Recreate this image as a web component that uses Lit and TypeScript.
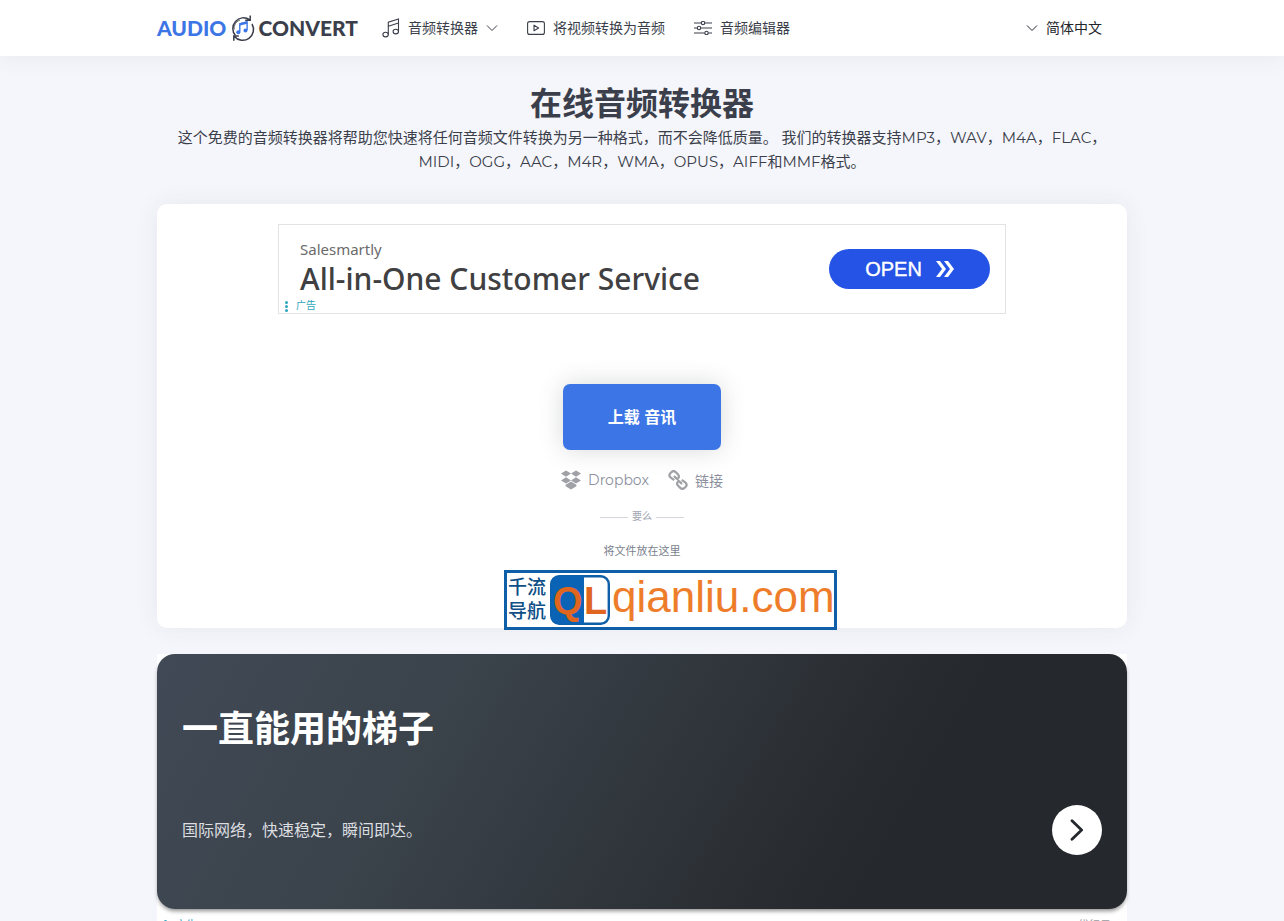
import { LitElement, html, css, svg } from "lit";
import { customElement } from "lit/decorators.js";

const chevron = html`<svg width="12" height="8" viewBox="0 0 12 8" aria-hidden="true">
  <path d="M1 1.5 6 6.5 11 1.5" fill="none" stroke="currentColor" />
</svg>`;

const noteIcon = html`<svg width="18" height="20" viewBox="0 0 18 20" fill="none" stroke="currentColor" stroke-width="1.1" aria-hidden="true">
  <ellipse cx="3.6" cy="16.6" rx="2.7" ry="2.3" /><ellipse cx="13.8" cy="13.6" rx="2.7" ry="2.3" />
  <path d="M6.3 16.6V4.2L16.5 1v12.6M6.3 8.2 16.5 5" />
</svg>`;

const videoIcon = html`<svg width="18" height="14" viewBox="0 0 18 14" fill="none" stroke="currentColor" stroke-width="1.1" aria-hidden="true">
  <rect x=".6" y=".6" width="16.8" height="12.8" rx="2" /><path d="M7 4.2v5.6L11.6 7z" stroke-linejoin="round" />
</svg>`;

const slidersIcon = html`<svg width="18" height="14" viewBox="0 0 18 14" fill="none" stroke="currentColor" stroke-width="1.1" aria-hidden="true">
  <path d="M0 2h7.2M10.8 2H18M0 7h3.2M6.8 7H18M0 12h10.7M14.3 12H18" />
  <circle cx="9" cy="2" r="1.7" /><circle cx="5" cy="7" r="1.7" /><circle cx="12.5" cy="12" r="1.7" />
</svg>`;

const logoMark = html`<svg width="26" height="28" viewBox="0 0 26 28" fill="none" aria-hidden="true">
  <g stroke="#3b3f4b" stroke-width="1.5">
    <path d="M6.4 21.6A10.8 10.8 0 0 1 20.6 5.6M16.2 6.2h5V1.6" />
    <path d="M5.2 15.5A8.6 8.6 0 0 1 11 6" stroke-width=".8" />
    <path d="M23 10A10.8 10.8 0 0 1 5.4 22.4M4.8 26.8v-4.8h5" />
  </g>
  <path d="M10.8 17.8V9.8L18.1 8v8" stroke="#3c76e6" stroke-width="1.4" />
  <path d="M10.8 10.3 18.1 8.5" stroke="#3c76e6" stroke-width="2.4" />
  <circle cx="9.3" cy="18.2" r="2" fill="#3c76e6" /><circle cx="16.5" cy="16.6" r="2" fill="#3c76e6" />
</svg>`;

const dropboxIcon = html`<svg width="20" height="20" viewBox="0 0 20 20" fill="currentColor" aria-hidden="true">
  <path d="M5 .5 10 3.6 5 6.8 0 3.6zM15 .5l5 3.1-5 3.2-5-3.2zM5 7.2l5 3.2-5 3.1-5-3.1zM15 7.2l5 3.2-5 3.1-5-3.1zM10 11.6l5.4 3.2v1.4L10 19.6l-5.4-3.4v-1.4z" />
</svg>`;

const linkIcon = html`<svg width="20" height="20" viewBox="0 0 20 20" fill="none" stroke="currentColor" stroke-width="2.2" aria-hidden="true">
  <path d="M6.2 10.2 2.5 7.4a3 3 0 0 1-.2-4.2l1.2-1.1a3 3 0 0 1 4.2 0l2.2 2.2a3 3 0 0 1 0 4.2L8.6 9.8M13.8 9.8l3.7 2.8a3 3 0 0 1 .2 4.2l-1.2 1.1a3 3 0 0 1-4.2 0l-2.2-2.2a3 3 0 0 1 0-4.2l1.3-1.3" stroke-linejoin="round" />
  <path d="m6.6 6.6 1.8 1.8M11.6 11.6l1.8 1.8" stroke-linecap="round" />
</svg>`;

const dots = html`<svg width="3" height="11" viewBox="0 0 3 11" fill="currentColor" aria-hidden="true">
  ${[1.5, 5.5, 9.5].map((y) => svg`<circle cx="1.5" cy=${y} r="1.5" />`)}
</svg>`;

@customElement("site-header")
class SiteHeader extends LitElement {
  static styles = css`
    :host { display: block; background: #fff; box-shadow: 0 0 24px rgba(59, 63, 75, 0.08); }
    .bar { display: flex; align-items: center; max-width: 970px; height: 56px; margin: 0 auto; }
    a, button { display: flex; align-items: center; gap: 8px; color: #3b3f4b; text-decoration: none; font: inherit; background: none; border: 0; padding: 0; cursor: pointer; }
    .logo { gap: 3px; color: #3c76e6; font: 900 21px/28px Lato, sans-serif; }
    .logo-dark { color: #3b3f4b; }
    nav { display: flex; gap: 29px; margin-left: 24px; font-size: 14px; }
    .label { padding-bottom: 2px; }
    .language { margin-left: auto; margin-right: 25px; font-size: 14px; color: #23252c; }
  `;
  render() {
    return html`<div class="bar">
      <a class="logo" href="#"><span>AUDIO</span>${logoMark}<span class="logo-dark">CONVERT</span></a>
      <nav>
        <button>${noteIcon}<span class="label">音频转换器</span>${chevron}</button>
        <a href="#video">${videoIcon}<span class="label">将视频转换为音频</span></a>
        <a href="#editor">${slidersIcon}<span class="label">音频编辑器</span></a>
      </nav>
      <button class="language">${chevron}<span class="label">简体中文</span></button>
    </div>`;
  }
}

@customElement("text-ad")
class TextAd extends LitElement {
  static styles = css`
    :host { display: block; box-sizing: border-box; width: 100%; max-width: 728px; border: 1px solid #e3e3e6; }
    .ad { display: flex; align-items: center; justify-content: space-between; padding: 14px 15px 0 21px; }
    .brand { font: 15px/20px "Noto Sans", sans-serif; color: #6b6b6b; }
    .title { font: 500 30px/40px "Noto Sans", sans-serif; color: #404042; }
    .open { display: flex; align-items: center; justify-content: center; gap: 14px; width: 161px; height: 40px; border: 0; border-radius: 20px; background: #2453e6; color: #fff; font: 20px "Liberation Sans", sans-serif; -webkit-text-stroke: 0.4px #fff; }
    .mark { display: flex; align-items: center; gap: 8px; padding: 0 0 0 6px; color: #2ea6bd; font-size: 10px; line-height: 14px; }
  `;
  render() {
    return html`<div class="ad">
        <div><div class="brand">Salesmartly</div><div class="title">All-in-One Customer Service</div></div>
        <button class="open">OPEN
          <svg width="18" height="16" viewBox="0 0 18 16" fill="#fff" aria-hidden="true"><path d="M0 0h4l6 8-6 8H0l6-8zM8 0h4l6 8-6 8H8l6-8z" /></svg>
        </button>
      </div>
      <div class="mark">${dots}广告</div>`;
  }
}

@customElement("upload-card")
class UploadCard extends LitElement {
  static styles = css`
    :host { position: relative; display: flex; flex-direction: column; align-items: center; box-sizing: border-box; padding: 20px 20px 68px; background: #fff; border-radius: 10px; box-shadow: 0 0 24px rgba(59, 63, 75, 0.07); }
    .upload { margin-top: 70px; width: 158px; height: 66px; padding-bottom: 4px; border: 0; border-radius: 7px; background: #3c76e6; color: #fff; font: inherit; font-size: 16px; font-weight: 700; box-shadow: 0 0 24px rgba(59, 63, 75, 0.2); cursor: pointer; }
    .sources { display: flex; gap: 19px; margin-top: 18px; }
    .sources a { display: flex; align-items: center; gap: 7px; height: 24px; color: #8c909e; text-decoration: none; font-size: 14px; }
    .sources svg { color: #a0a1a6; }
    .or { display: flex; align-items: center; gap: 4px; margin-top: 16px; font-size: 10px; line-height: 18px; color: #a0a4b2; }
    .or::before, .or::after { content: ""; width: 28px; height: 1px; background: #d4d6dd; }
    .drop { margin: 16px 0 0; font-size: 11px; line-height: 18px; color: #7b7f8e; }
    .badge { position: absolute; left: 50%; bottom: -2px; margin-left: -138px; display: flex; align-items: center; box-sizing: border-box; width: 333px; height: 60px; padding-left: 1px; border: 3px solid #0e5fa8; background: #fff; white-space: nowrap; }
    .site { flex: none; width: 42px; color: #0d4f86; font-size: 19px; font-weight: 500; line-height: 24px; }
    .domain { padding-bottom: 6px; color: #ee7d2b; font: 44px/46px "Liberation Sans Narrow", "Liberation Sans", sans-serif; font-family: "Liberation Sans", sans-serif; }
    .tile { flex: none; margin-right: 2px; font: 700 38px "Liberation Sans", sans-serif; }
  `;
  render() {
    return html`<text-ad></text-ad>
      <button class="upload">上载 音讯</button>
      <div class="sources">
        <a href="#dropbox">${dropboxIcon}Dropbox</a>
        <a href="#link">${linkIcon}链接</a>
      </div>
      <div class="or">要么</div>
      <p class="drop">将文件放在这里</p>
      <div class="badge">
        <div class="site">千流<br />导航</div>
        <svg class="tile" width="60" height="50" viewBox="0 0 60 50" aria-label="QL">
          <rect x="1.2" y="1.2" width="57.6" height="47.6" rx="8" fill="#fff" stroke="#0e5fa8" stroke-width="2.4" />
          <path d="M34 1H9a8 8 0 0 0-8 8v32a8 8 0 0 0 8 8h25z" fill="#0a63b5" />
          <text x="3" y="39" fill="#e0651f">Q</text><text x="34" y="39" fill="#e0651f">L</text>
        </svg>
        <span class="domain">qianliu.com</span>
      </div>`;
  }
}

@customElement("dark-ad")
class DarkAd extends LitElement {
  static styles = css`
    :host { display: block; background: #fff; }
    .panel { box-sizing: border-box; padding: 48px 25px 54px; border-radius: 18px; color: #fff; background: linear-gradient(120deg, #414956 0%, #3a424a 30%, #25282c 75%); box-shadow: 0 3px 4px -1px rgba(0, 0, 0, 0.45); }
    h2 { margin: 0; font-size: 36px; line-height: 54px; font-weight: 700; }
    .row { display: flex; align-items: center; justify-content: space-between; margin-top: 49px; font-size: 16px; color: #dcdee0; }
    .row p { margin: 0; padding-bottom: 3px; }
    .go { display: flex; align-items: center; justify-content: center; width: 50px; height: 50px; padding: 0; border: 0; border-radius: 50%; background: #fff; }
    .foot { display: flex; justify-content: space-between; padding: 8px 16px 0 7px; font-size: 11px; line-height: 16px; color: #9b9b9f; }
    .mark { display: flex; align-items: center; gap: 8px; color: #2ea6bd; }
  `;
  render() {
    return html`<div class="panel">
        <h2>一直能用的梯子</h2>
        <div class="row">
          <p>国际网络，快速稳定，瞬间即达。</p>
          <button class="go" aria-label="打开">
            <svg width="14" height="22" viewBox="0 0 14 22" fill="none" stroke="#25282c" stroke-width="2.8" stroke-linecap="round" stroke-linejoin="round"><path d="m2 1.8 9.6 9.2L2 20.2" /></svg>
          </button>
        </div>
      </div>
      <div class="foot"><span class="mark">${dots}广告</span><span>优行云</span></div>`;
  }
}

@customElement("app-root")
class AppRoot extends LitElement {
  static styles = css`
    :host { display: block; height: 100vh; overflow: hidden; background: #f5f6fb; color: #3b3f4b; font-family: Montserrat, "Noto Sans CJK SC", sans-serif; }
    main { max-width: 970px; margin: 0 auto; }
    h1 { margin: 25px 0 0; text-align: center; font-size: 32px; line-height: 45px; font-weight: 700; }
    .intro { margin: 0 0 30px; padding: 0 15px; text-align: center; font-size: 15px; line-height: 24px; }
    dark-ad { margin-top: 26px; }
  `;
  render() {
    return html`<site-header></site-header>
      <main>
        <h1>在线音频转换器</h1>
        <p class="intro">这个免费的音频转换器将帮助您快速将任何音频文件转换为另一种格式，而不会降低质量。 我们的转换器支持MP3，WAV，M4A，FLAC，MIDI，OGG，AAC，M4R，WMA，OPUS，AIFF和MMF格式。</p>
        <upload-card></upload-card>
        <dark-ad></dark-ad>
      </main>`;
  }
}
